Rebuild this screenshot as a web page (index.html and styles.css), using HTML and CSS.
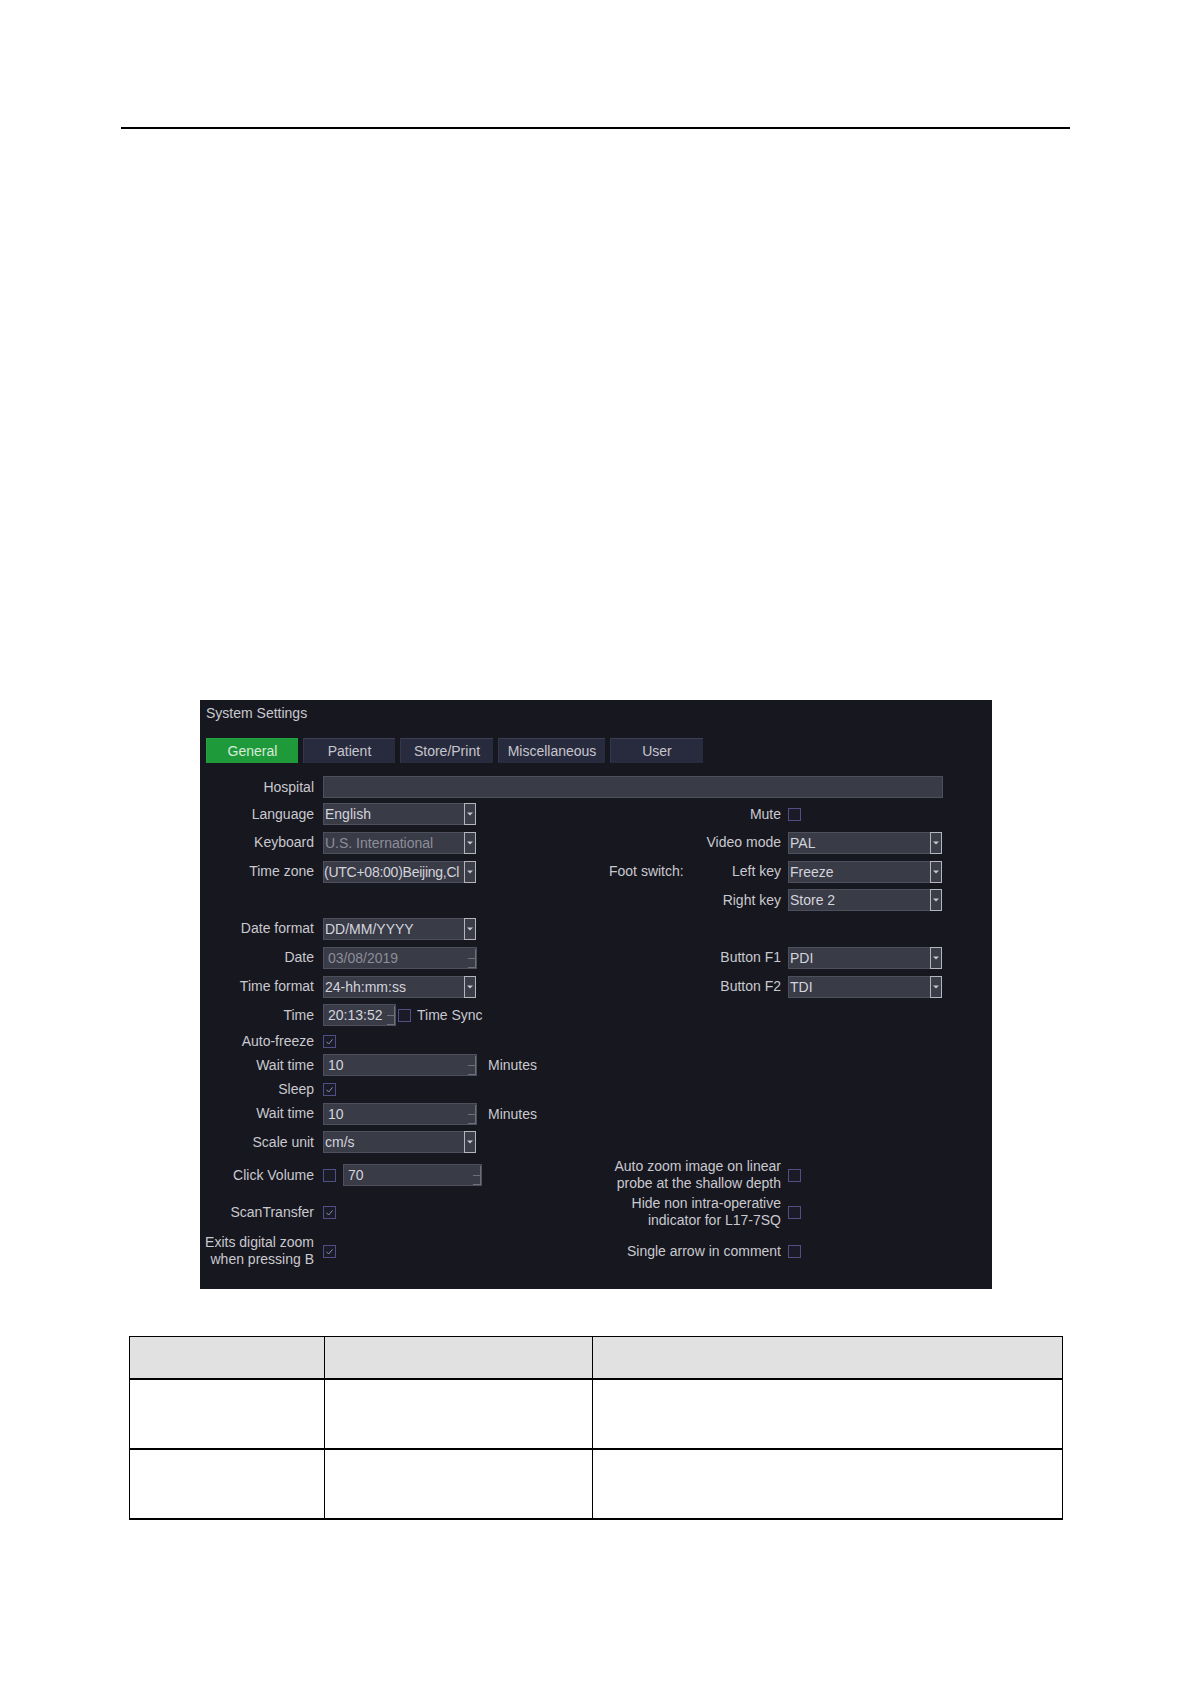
FILE: index.html
```html
<!DOCTYPE html>
<html lang="en">
<head>
<meta charset="utf-8">
<title>System Settings</title>
<link rel="stylesheet" href="styles.css">
</head>
<body>
<div class="page">
  <div class="rule"></div>

  <div class="panel">
    <div class="title">System Settings</div>
    <div class="tabs">
      <div class="tab active">General</div>
      <div class="tab">Patient</div>
      <div class="tab mid">Store/Print</div>
      <div class="tab wide">Miscellaneous</div>
      <div class="tab mid">User</div>
    </div>

    <div class="form">
      <!-- row 1 -->
      <div class="lbl">Hospital</div>
      <div class="ctl span3"><div class="box field"></div></div>

      <!-- row 2 -->
      <div class="lbl">Language</div>
      <div class="ctl"><div class="box drop"><span class="val">English</span><svg class="arrow" width="12" height="22" viewBox="0 0 12 22"><rect x="0.5" y="0.5" width="11" height="21" fill="#3b3d49" stroke="#b4b4bc"/><path d="M3 9.5h6l-3 3z" fill="#c8c8d0"/></svg></div></div>
      <div class="lbl r">Mute</div>
      <div class="ctl"><span class="check"></span></div>

      <!-- row 3 -->
      <div class="lbl">Keyboard</div>
      <div class="ctl"><div class="box drop"><span class="val dim">U.S. International</span><svg class="arrow" width="12" height="22" viewBox="0 0 12 22"><rect x="0.5" y="0.5" width="11" height="21" fill="#3b3d49" stroke="#b4b4bc"/><path d="M3 9.5h6l-3 3z" fill="#c8c8d0"/></svg></div></div>
      <div class="lbl r">Video mode</div>
      <div class="ctl"><div class="box drop rd"><span class="val">PAL</span><svg class="arrow" width="12" height="22" viewBox="0 0 12 22"><rect x="0.5" y="0.5" width="11" height="21" fill="#3b3d49" stroke="#b4b4bc"/><path d="M3 9.5h6l-3 3z" fill="#c8c8d0"/></svg></div></div>

      <!-- row 4 -->
      <div class="lbl">Time zone</div>
      <div class="ctl"><div class="box drop"><span class="val tight">(UTC+08:00)Beijing,Cl</span><svg class="arrow" width="12" height="22" viewBox="0 0 12 22"><rect x="0.5" y="0.5" width="11" height="21" fill="#3b3d49" stroke="#b4b4bc"/><path d="M3 9.5h6l-3 3z" fill="#c8c8d0"/></svg></div></div>
      <div class="lbl r foot"><span>Foot switch:</span><span>Left key</span></div>
      <div class="ctl"><div class="box drop rd"><span class="val">Freeze</span><svg class="arrow" width="12" height="22" viewBox="0 0 12 22"><rect x="0.5" y="0.5" width="11" height="21" fill="#3b3d49" stroke="#b4b4bc"/><path d="M3 9.5h6l-3 3z" fill="#c8c8d0"/></svg></div></div>

      <!-- row 5 -->
      <div></div>
      <div></div>
      <div class="lbl r">Right key</div>
      <div class="ctl"><div class="box drop rd"><span class="val">Store 2</span><svg class="arrow" width="12" height="22" viewBox="0 0 12 22"><rect x="0.5" y="0.5" width="11" height="21" fill="#3b3d49" stroke="#b4b4bc"/><path d="M3 9.5h6l-3 3z" fill="#c8c8d0"/></svg></div></div>

      <!-- row 6 -->
      <div class="lbl">Date format</div>
      <div class="ctl"><div class="box drop"><span class="val">DD/MM/YYYY</span><svg class="arrow" width="12" height="22" viewBox="0 0 12 22"><rect x="0.5" y="0.5" width="11" height="21" fill="#3b3d49" stroke="#b4b4bc"/><path d="M3 9.5h6l-3 3z" fill="#c8c8d0"/></svg></div></div>
      <div></div>
      <div></div>

      <!-- row 7 -->
      <div class="lbl">Date</div>
      <div class="ctl"><div class="box spin"><span class="val dim">03/08/2019</span><svg class="spinner" width="9" height="20" viewBox="0 0 9 20"><path d="M1 10.5h8M1 19.5h8M8.5 1v19" stroke="#6c6e7a" fill="none"/></svg></div></div>
      <div class="lbl r">Button F1</div>
      <div class="ctl"><div class="box drop rd"><span class="val">PDI</span><svg class="arrow" width="12" height="22" viewBox="0 0 12 22"><rect x="0.5" y="0.5" width="11" height="21" fill="#3b3d49" stroke="#b4b4bc"/><path d="M3 9.5h6l-3 3z" fill="#c8c8d0"/></svg></div></div>

      <!-- row 8 -->
      <div class="lbl">Time format</div>
      <div class="ctl"><div class="box drop"><span class="val">24-hh:mm:ss</span><svg class="arrow" width="12" height="22" viewBox="0 0 12 22"><rect x="0.5" y="0.5" width="11" height="21" fill="#3b3d49" stroke="#b4b4bc"/><path d="M3 9.5h6l-3 3z" fill="#c8c8d0"/></svg></div></div>
      <div class="lbl r">Button F2</div>
      <div class="ctl"><div class="box drop rd"><span class="val">TDI</span><svg class="arrow" width="12" height="22" viewBox="0 0 12 22"><rect x="0.5" y="0.5" width="11" height="21" fill="#3b3d49" stroke="#b4b4bc"/><path d="M3 9.5h6l-3 3z" fill="#c8c8d0"/></svg></div></div>

      <!-- row 9 -->
      <div class="lbl">Time</div>
      <div class="ctl"><div class="box spin short"><span class="val">20:13:52</span><svg class="spinner" width="9" height="20" viewBox="0 0 9 20"><path d="M1 10.5h8M1 19.5h8M8.5 1v19" stroke="#6c6e7a" fill="none"/></svg></div><span class="check sync"></span><span class="after">Time Sync</span></div>
      <div></div>
      <div></div>

      <!-- row 10 -->
      <div class="lbl">Auto-freeze</div>
      <div class="ctl"><svg class="check-svg" width="13" height="13" viewBox="0 0 13 13"><rect x="0.5" y="0.5" width="12" height="12" fill="#1b1b28" stroke="#504e84"/><path d="M3.5 6.8l2.2 2.2 3.8-4.6" stroke="#8d8bb5" fill="none"/></svg></div>
      <div></div>
      <div></div>

      <!-- row 11 -->
      <div class="lbl">Wait time</div>
      <div class="ctl"><div class="box spin"><span class="val">10</span><svg class="spinner" width="9" height="20" viewBox="0 0 9 20"><path d="M1 10.5h8M1 19.5h8M8.5 1v19" stroke="#6c6e7a" fill="none"/></svg></div><span class="unit">Minutes</span></div>
      <div></div>
      <div></div>

      <!-- row 12 -->
      <div class="lbl">Sleep</div>
      <div class="ctl"><svg class="check-svg" width="13" height="13" viewBox="0 0 13 13"><rect x="0.5" y="0.5" width="12" height="12" fill="#1b1b28" stroke="#504e84"/><path d="M3.5 6.8l2.2 2.2 3.8-4.6" stroke="#8d8bb5" fill="none"/></svg></div>
      <div></div>
      <div></div>

      <!-- row 13 -->
      <div class="lbl">Wait time</div>
      <div class="ctl"><div class="box spin"><span class="val">10</span><svg class="spinner" width="9" height="20" viewBox="0 0 9 20"><path d="M1 10.5h8M1 19.5h8M8.5 1v19" stroke="#6c6e7a" fill="none"/></svg></div><span class="unit">Minutes</span></div>
      <div></div>
      <div></div>

      <!-- row 14 -->
      <div class="lbl">Scale unit</div>
      <div class="ctl"><div class="box drop"><span class="val">cm/s</span><svg class="arrow" width="12" height="22" viewBox="0 0 12 22"><rect x="0.5" y="0.5" width="11" height="21" fill="#3b3d49" stroke="#b4b4bc"/><path d="M3 9.5h6l-3 3z" fill="#c8c8d0"/></svg></div></div>
      <div></div>
      <div></div>

      <!-- row 15 -->
      <div class="lbl">Click Volume</div>
      <div class="ctl"><span class="check"></span><div class="box spin vol"><span class="val">70</span><svg class="spinner" width="9" height="20" viewBox="0 0 9 20"><path d="M1 10.5h8M1 19.5h8M8.5 1v19" stroke="#6c6e7a" fill="none"/></svg></div></div>
      <div class="lbl r">Auto zoom image on linear<br>probe at the shallow depth</div>
      <div class="ctl"><span class="check"></span></div>

      <!-- row 16 -->
      <div class="lbl">ScanTransfer</div>
      <div class="ctl"><svg class="check-svg" width="13" height="13" viewBox="0 0 13 13"><rect x="0.5" y="0.5" width="12" height="12" fill="#1b1b28" stroke="#504e84"/><path d="M3.5 6.8l2.2 2.2 3.8-4.6" stroke="#8d8bb5" fill="none"/></svg></div>
      <div class="lbl r">Hide non intra-operative<br>indicator for L17-7SQ</div>
      <div class="ctl"><span class="check"></span></div>

      <!-- row 17 -->
      <div class="lbl">Exits digital zoom<br>when pressing B</div>
      <div class="ctl"><svg class="check-svg" width="13" height="13" viewBox="0 0 13 13"><rect x="0.5" y="0.5" width="12" height="12" fill="#1b1b28" stroke="#504e84"/><path d="M3.5 6.8l2.2 2.2 3.8-4.6" stroke="#8d8bb5" fill="none"/></svg></div>
      <div class="lbl r">Single arrow in comment</div>
      <div class="ctl"><span class="check"></span></div>
    </div>
  </div>

  <table class="tbl">
    <colgroup>
      <col class="c1"><col class="c2"><col class="c3">
    </colgroup>
    <tr class="head"><td></td><td></td><td></td></tr>
    <tr class="row"><td></td><td></td><td></td></tr>
    <tr class="row"><td></td><td></td><td></td></tr>
  </table>
</div>
</body>
</html>
```

FILE: styles.css
```css
* {
  box-sizing: border-box;
}

body {
  margin: 0;
  background: #ffffff;
  font-family: "Liberation Sans", Arial, sans-serif;
}

.page {
  padding-top: 127px;
}

.rule {
  margin-left: 121px;
  width: 949px;
  height: 2px;
  background: #000000;
}

.panel {
  margin: 571px 0 0 200px;
  width: 792px;
  height: 589px;
  background: #17171f;
  color: #c9c9cf;
  font-size: 14px;
  overflow: hidden;
}

.title {
  height: 26px;
  line-height: 26px;
  padding-left: 6px;
}

.tabs {
  display: flex;
  gap: 5px;
  margin-top: 12px;
  padding-left: 6px;
  height: 25px;
}

.tab {
  width: 92px;
  height: 25px;
  display: flex;
  align-items: center;
  justify-content: center;
  background: #282b3d;
  border-top: 1px solid #3c3f54;
  border-left: 1px solid #34374b;
  color: #c6c6ce;
}

.tab.mid {
  width: 93px;
}

.tab.wide {
  width: 107px;
}

.tab.active {
  background: #1f9a3b;
  border-color: #23a442;
  color: #d8ead8;
}

.form {
  display: grid;
  grid-template-columns: 123px 283px 182px 155px;
  grid-template-rows: 26px 28px 29px 29px 28px 29px 29px 29px 28px 24px 24px 24px 25px 32px 34px 40px 38px;
  margin-top: 11px;
}

.lbl {
  display: flex;
  align-items: center;
  justify-content: flex-end;
  text-align: right;
  padding-right: 9px;
  white-space: nowrap;
  line-height: 17px;
}

.lbl.r {
  padding-right: 7px;
}

.lbl.foot {
  justify-content: space-between;
  padding-left: 3px;
}

.ctl {
  display: flex;
  align-items: center;
}

.span3 {
  grid-column: span 3;
}

.box {
  height: 22px;
  border: 1px solid #4d4f5c;
  background: #393b47;
  display: flex;
  align-items: center;
  color: #d4d4dc;
}

.field {
  width: 620px;
}

.drop {
  width: 153px;
}

.drop.rd {
  width: 154px;
}

.val {
  flex: 1;
  min-width: 0;
  padding-left: 1px;
  overflow: hidden;
  white-space: nowrap;
}

.val.tight {
  padding-left: 0;
  letter-spacing: -0.25px;
}

.spin {
  width: 154px;
}

.spin .val {
  padding-left: 4px;
}

.spin.short {
  width: 73px;
}

.spin.vol {
  width: 139px;
  margin-left: 7px;
}

.dim {
  color: #8c8e98;
}

.arrow {
  flex: none;
  display: block;
  margin: -1px -1px -1px 0;
}

.spinner {
  flex: none;
  display: block;
}

.check {
  display: block;
  flex: none;
  width: 13px;
  height: 13px;
  border: 1px solid #504e84;
  background: #1b1b28;
}

.check-svg {
  display: block;
  flex: none;
}

.sync {
  margin-left: 2px;
}

.after {
  margin-left: 6px;
}

.unit {
  margin-left: 11px;
}

.tbl {
  margin: 47px 0 0 129px;
  width: 933px;
  border-collapse: collapse;
  table-layout: fixed;
}

.c1 {
  width: 195px;
}

.c2 {
  width: 268px;
}

.c3 {
  width: 470px;
}

.tbl td {
  border: 1px solid #000000;
  padding: 0;
}

.head td {
  height: 42px;
  background: #e1e1e1;
  border-bottom: 2px solid #000000;
}

.row td {
  height: 70px;
  border-bottom: 2px solid #000000;
}
```
